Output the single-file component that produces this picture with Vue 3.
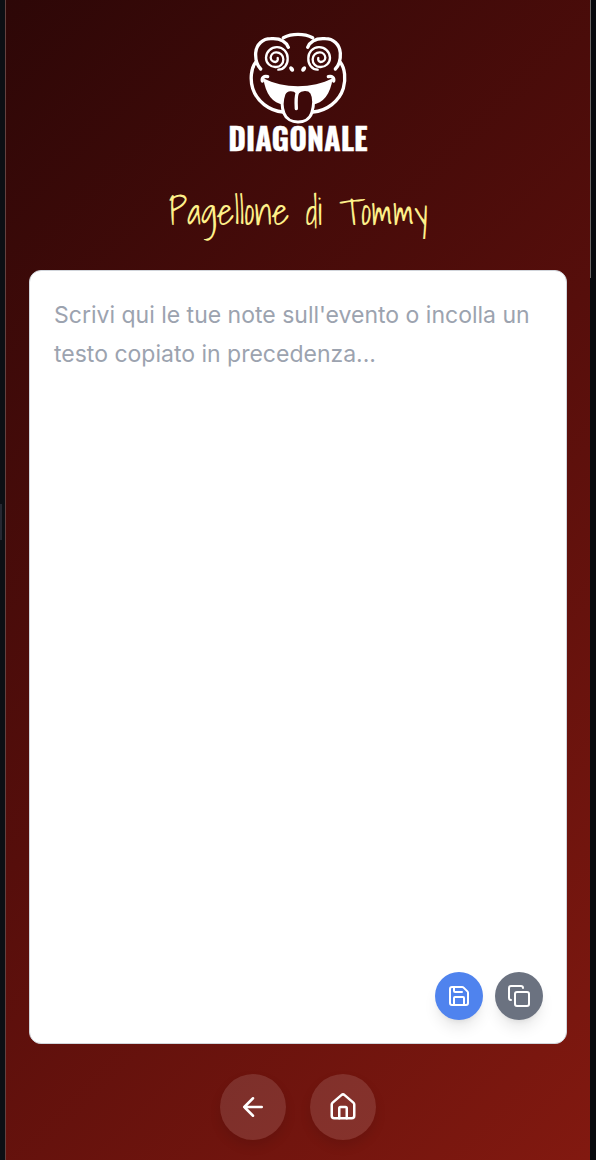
<script setup>
import { ref } from 'vue'

const notes = ref('')
</script>

<template>
  <div class="shell">
    <div class="rail rail-left"><span class="grip"></span></div>
    <main class="screen">
      <svg class="logo" viewBox="24 21 420 360" role="img" aria-label="Diagonale">
        <g class="line">
          <path d="M190 38C216 25 252 25 278 38" />
          <g id="half-face">
            <path d="M122 132C111 121 106 104 107 84C109 57 129 41 152 41C177 39 197 48 205 67" />
            <path d="M107 112C93 130 90 163 98 190C110 229 148 258 189 261" />
            <path class="thin" d="M175 134C192 134 204 118 203 100A32 32 0 0 0 138 98A28 28 0 0 0 168 126A22 22 0 0 0 190 103A21 21 0 0 0 168 82A17 17 0 0 0 152 98A14 14 0 0 0 166 111A9 9 0 0 0 173 99" />
            <path d="M127 168C125 158 132 152 143 155" />
          </g>
          <use href="#half-face" transform="translate(468 0) scale(-1 1)" />
        </g>
        <ellipse class="solid" cx="215" cy="132" rx="6" ry="9" transform="rotate(-35 215 132)" />
        <ellipse class="solid" cx="251" cy="132" rx="6" ry="9" transform="rotate(35 251 132)" />
        <path class="solid" d="M130 160C190 192 278 192 338 160C332 207 309 236 277 239H191C159 236 136 207 130 160Z" />
        <path class="tongue" d="M232 203C222 191 199 191 192 207C185 226 186 250 192 265C205 299 262 301 275 265C281 245 283 218 275 203C267 190 243 191 232 203Z" />
        <path class="line" d="M232 203C227 216 228 235 229 251" />
        <text class="wordmark" x="234" y="379" text-anchor="middle">DIAGONALE</text>
      </svg>
      <h1>Pagellone di Tommy</h1>
      <section class="editor">
        <textarea v-model="notes" aria-label="Note sull'evento" placeholder="Scrivi qui le tue note sull'evento o incolla un testo copiato in precedenza..."></textarea>
        <div class="tools">
          <button class="tool save" type="button" aria-label="Salva">
            <svg class="icon" viewBox="0 0 24 24">
              <path d="M15.2 3a2 2 0 0 1 1.4.6l3.8 3.8a2 2 0 0 1 .6 1.4V19a2 2 0 0 1-2 2H5a2 2 0 0 1-2-2V5a2 2 0 0 1 2-2z" />
              <path d="M17 21v-7a1 1 0 0 0-1-1H8a1 1 0 0 0-1 1v7M7 3v4a1 1 0 0 0 1 1h7" />
            </svg>
          </button>
          <button class="tool copy" type="button" aria-label="Copia">
            <svg class="icon" viewBox="0 0 24 24">
              <rect x="8" y="8" width="14" height="14" rx="2" />
              <path d="M4 16c-1.1 0-2-.9-2-2V4c0-1.1.9-2 2-2h10c1.1 0 2 .9 2 2" />
            </svg>
          </button>
        </div>
      </section>
      <nav>
        <button class="round" type="button" aria-label="Indietro">
          <svg class="icon big" viewBox="0 0 24 24"><path d="m12 19-7-7 7-7M19 12H5" /></svg>
        </button>
        <button class="round" type="button" aria-label="Home">
          <svg class="icon big" viewBox="0 0 24 24">
            <path d="M15 21v-8a1 1 0 0 0-1-1h-4a1 1 0 0 0-1 1v8" />
            <path d="M3 10a2 2 0 0 1 .709-1.528l7-5.999a2 2 0 0 1 2.582 0l7 5.999A2 2 0 0 1 21 10v9a2 2 0 0 1-2 2H5a2 2 0 0 1-2-2z" />
          </svg>
        </button>
      </nav>
    </main>
    <div class="rail rail-right"><span class="scrollbar"></span></div>
  </div>
</template>

<style>
body {
  background: #0c0e14;
}
</style>

<style scoped>
.shell {
  display: grid;
  grid-template-columns: 5px minmax(0, 1fr) 6px;
  min-height: 100vh;
  box-sizing: border-box;
}
.rail {
  display: flex;
  background: #0c0f14;
}
.rail-left {
  align-items: center;
}
.rail-right {
  background: #08090d;
}
.grip {
  width: 2px;
  height: 36px;
  margin-bottom: 116px;
  background: #262832;
}
.scrollbar {
  width: 1px;
  height: 24vh;
  background: #6b6563;
}
.screen {
  display: flex;
  flex-direction: column;
  align-items: center;
  box-sizing: border-box;
  padding: 32px 23px 20px;
  border-left: 1px solid #63413f;
  background: linear-gradient(135deg, #2d0707, #560e0b 50%, #821910);
}
.logo {
  width: 140px;
  height: 120px;
  overflow: visible;
}
.line {
  fill: none;
  stroke: #fff;
  stroke-width: 10;
  stroke-linecap: round;
  stroke-linejoin: round;
}
.thin {
  stroke-width: 7;
}
.solid {
  fill: #fff;
}
.tongue {
  fill: #3d0909;
  stroke: #fff;
  stroke-width: 9;
}
.wordmark {
  fill: #fff;
  stroke: #fff;
  stroke-width: 1;
  font: 700 91px Oswald, Anton, "Liberation Sans Narrow", sans-serif;
}
h1 {
  margin: 36px 0 34px;
  color: #fef08a;
  font: 300 37px/48px "Shadows Into Light", Lato, sans-serif;
}
.editor {
  position: relative;
  display: flex;
  flex: 1;
  width: 100%;
}
textarea {
  flex: 1;
  min-width: 0;
  box-sizing: border-box;
  padding: 25px 24px;
  border: 1px solid #d1d5db;
  border-radius: 12px;
  background: #fff;
  color: #1f2937;
  font: 23px/39px Inter, sans-serif;
  resize: none;
  outline: none;
}
textarea::placeholder {
  color: #9ca3af;
  opacity: 1;
}
.tools {
  position: absolute;
  right: 24px;
  bottom: 24px;
  display: flex;
  gap: 12px;
}
button {
  display: grid;
  place-items: center;
  padding: 0;
  border: 0;
  border-radius: 50%;
  color: #fff;
}
.tool {
  width: 48px;
  height: 48px;
  box-shadow: 0 10px 15px -3px rgb(0 0 0 / 10%), 0 4px 6px -4px rgb(0 0 0 / 10%);
}
.save {
  background: #4f83ee;
}
.copy {
  background: #6b7280;
}
nav {
  display: flex;
  gap: 24px;
  margin-top: 30px;
}
.round {
  width: 66px;
  height: 66px;
  background: rgb(255 255 255 / 12%);
  box-shadow: 0 6px 12px rgb(0 0 0 / 10%);
}
.icon {
  width: 24px;
  height: 24px;
  fill: none;
  stroke: currentColor;
  stroke-width: 2;
  stroke-linecap: round;
  stroke-linejoin: round;
}
.big {
  width: 30px;
  height: 30px;
}
</style>
